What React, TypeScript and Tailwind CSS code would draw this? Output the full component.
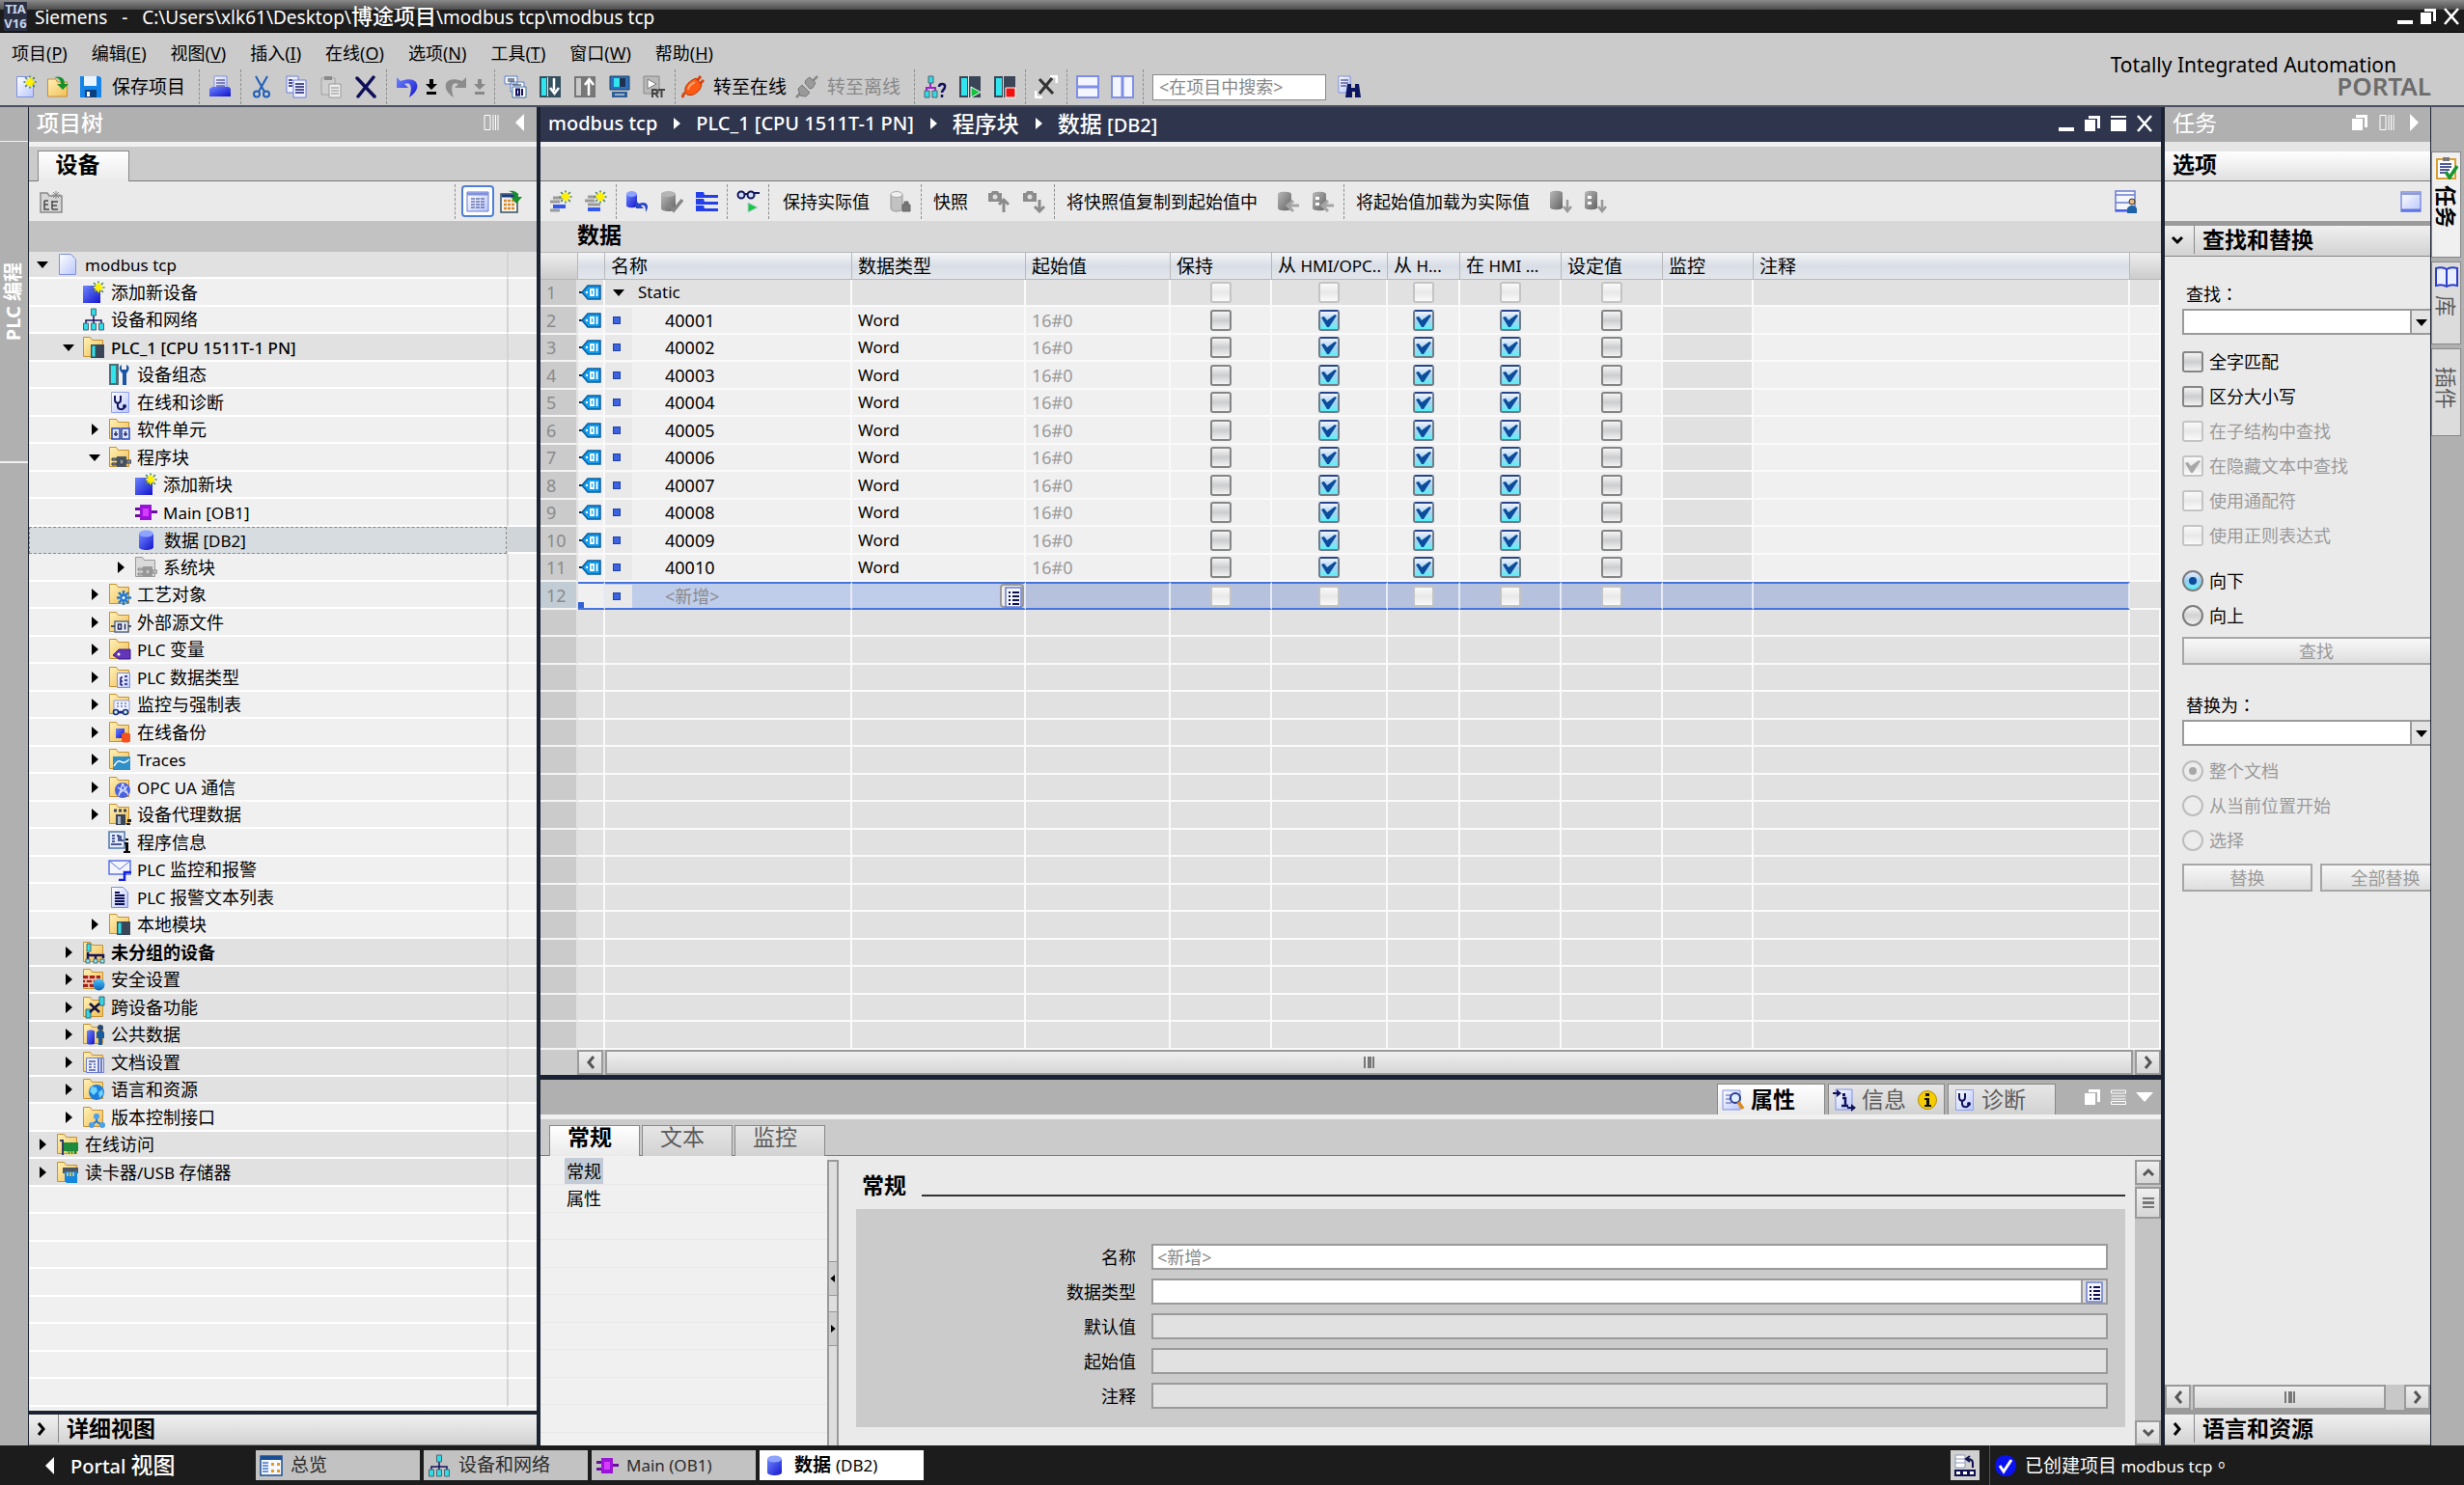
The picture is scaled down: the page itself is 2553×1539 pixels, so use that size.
import type { ReactNode } from "react";
import clsx from "clsx";

/* ---------- icon parts ---------- */

function Defs() {
  return (
    <svg width="0" height="0" className="absolute" aria-hidden="true">
      <defs>
        <linearGradient id="gold" x1="0" y1="0" x2="1" y2="1">
          <stop offset="0" stopColor="#fff1b8" />
          <stop offset="1" stopColor="#f0bf55" />
        </linearGradient>
        <linearGradient id="blue" x1="0" y1="0" x2="1" y2="1">
          <stop offset="0" stopColor="#6d86ff" />
          <stop offset="1" stopColor="#1414cc" />
        </linearGradient>
        <linearGradient id="page" x1="0" y1="0" x2="1" y2="1">
          <stop offset="0" stopColor="#ffffff" />
          <stop offset="1" stopColor="#b9c6fb" />
        </linearGradient>
        <linearGradient id="grey" x1="0" y1="0" x2="1" y2="1">
          <stop offset="0" stopColor="#b8b8b8" />
          <stop offset="1" stopColor="#626262" />
        </linearGradient>
        <linearGradient id="sky" x1="0" y1="0" x2="0" y2="1">
          <stop offset="0" stopColor="#4cc4ff" />
          <stop offset="1" stopColor="#0a63b5" />
        </linearGradient>
      </defs>
    </svg>
  );
}

const folder = <path d="M1.500 1.500h7l2 3h11v17h-20z" fill="url(#gold)" stroke="#c8912f" />;
const greyFolder = <path d="M1.500 1.500h7l2 3h11v17h-20z" fill="#d9d9d9" stroke="#9a9a9a" />;
const page = <path d="M3.500 1.500h12l5 5v16h-17z" fill="url(#page)" stroke="#7f90e0" />;
const star = (
  <g strokeLinecap="round">
    <path d="M17 1v12M11 7h12M12.500 2.500l9 9M21.500 2.500l-9 9" stroke="#3f7d5a" strokeWidth="1.500" />
    <path d="M17 3v8M13 7h8M14.500 4.500l5 5M19.500 4.500l-5 5" stroke="#fff200" strokeWidth="2" />
  </g>
);
const cylinder = (fill: string, top: string) => (
  <>
    <path d="M4 5v14c0 4 15 4 15 0V5z" fill={fill} />
    <ellipse cx="11.500" cy="5" rx="7.500" ry="3.500" fill={top} />
  </>
);
const plcBox = (
  <>
    <rect x="9" y="9" width="6" height="14" fill="#34505e" />
    <rect x="10.500" y="10.500" width="3" height="11" fill="#31e5ee" />
    <rect x="15" y="9" width="8" height="14" fill="#3a4557" />
  </>
);
const network = (
  <g>
    <path d="M12 8v5M4 17v-4h16v4M12 13v4" stroke="#131360" strokeWidth="1.500" fill="none" />
    <path d="M9.500 1h5v7h-5zM1.500 16h5v7h-5zM9.500 16h5v7h-5zM17.500 16h5v7h-5z" fill="#2fdce6" stroke="#4a6470" />
  </g>
);

const icons: Record<string, ReactNode> = {
  newProject: (<>{page}{star}</>),
  open: (<><path d="M1.500 4h8l2 3h10v15h-20z" fill="url(#gold)" stroke="#c8912f" /><path d="M8 2c7-2 11 1 11 7h4l-6 6-6-6h4c0-4-2-6-7-7z" fill="#15902c" /></>),
  save: (<><path d="M1 1h20l2 2v20H1z" fill="#1484e8" /><path d="M5 1h13v10H5z" fill="#eaf4ff" /><path d="M6 15h12v8H6z" fill="#0b3f80" /><path d="M8 17h3v5H8z" fill="#fff" /></>),
  print: (<><path d="M6 1h13v13H6z" fill="url(#page)" stroke="#7f90e0" /><path d="M8 5h9M8 8h9M8 11h9" stroke="#20207a" /><path d="M1 14l3-2h17l2 2v8H1z" fill="url(#blue)" /></>),
  cut: (<g fill="none" stroke="#1f5fb8" strokeWidth="2"><path d="M6 1l9 16M18 1L9 17" /><circle cx="7" cy="19.500" r="3" /><circle cx="17" cy="19.500" r="3" /></g>),
  copy: (<><path d="M2 1h12v17H2z" fill="#eef1ff" stroke="#6d7fd8" /><path d="M9 5h13v18H9z" fill="#eef1ff" stroke="#6d7fd8" /><path d="M11 9h9M11 12h9M11 15h9M11 18h9M4 5h4M4 8h4M4 11h4" stroke="#1a1a70" strokeWidth="1.500" /></>),
  paste: (<><path d="M2 3h14v17H2z" fill="#cfcfcf" stroke="#a0a0a0" /><path d="M5 1h8v4H5z" fill="#8a8a8a" /><path d="M10 9h12v14H10z" fill="#ededed" stroke="#999" /><path d="M12 13h8M12 16h8M12 19h8" stroke="#888" /></>),
  remove: (<path d="M3 3l18 19M20 2L4 22" stroke="#10105a" strokeWidth="3.500" strokeLinecap="round" />),
  undo: (<path d="M1 2v11h12l-4-4c6-3 9 2 5 14 14-9 10-24-9-17z" fill="url(#blue)" />),
  redo: (<path d="M23 2v11H11l4-4C9 6 6 11 10 23-4 14 0-1 19 6z" fill="#8b8b8b" />),
  compile: (<><path d="M1 1h13v8H1zM7 7h14v10H7z" fill="#f3f7ff" stroke="#5b7ec8" /><path d="M4 4h7M4 6h7M9 10h9" stroke="#123" /><path d="M9 12h14v11H9z" fill="#fff" stroke="#3c6ea0" /><path d="M13 14.500h3v6h-3zM19 14v7" fill="none" stroke="#101060" strokeWidth="2" /></>),
  download: (<><path d="M1 1h22v22H1z" fill="#34505e" /><path d="M3 3h5v18H3z" fill="#31e5ee" /><path d="M9 2h1v20H9z" fill="#e8e8e8" /><path d="M16 3v13M12 13l4.500 6 4.500-6" stroke="#fff" strokeWidth="2.500" fill="none" /></>),
  upload: (<><path d="M1 1h22v22H1z" fill="#777" /><path d="M3 3h5v18H3z" fill="#c9c9c9" /><path d="M16 21V6M12 10l4.500-6L21 10" stroke="#fff" strokeWidth="2.500" fill="none" /></>),
  simulate: (<><path d="M2 1h20v14H2z" fill="#2c6fc0" stroke="#21405e" /><path d="M6 3h6v9H6z" fill="#31e5ee" /><path d="M12 3h6v9h-6z" fill="#203050" /><path d="M4 17h16v6H4z" fill="#2d5f94" /><path d="M7 20h10" stroke="#fff" /></>),
  runtime: (<><path d="M1 1h16v18H1z" fill="#b9b9b9" stroke="#888" /><path d="M5 4l9 5-9 5z" fill="#fff" stroke="#777" /><path d="M10 23v-8h3c3 0 3 4 0 4h-3M13 19l3 4M16 15h7M19.500 15v8" stroke="#444" strokeWidth="2" fill="none" /></>),
  goOnline: (<><path d="M1 23c1-3 1-4 3-5M16 6l4-5M19 9l4-4" stroke="#d8430a" strokeWidth="3" /><path d="M4 17C3 11 7 8 11 5l4-2 6 7-2 5c-4 4-8 7-13 5z" fill="#ff5a14" stroke="#b53400" /><path d="M7 15c0-4 3-6 7-8" stroke="#ffa06a" strokeWidth="2" fill="none" /></>),
  goOffline: (<><path d="M1 23l5-5M18 6l5-5" stroke="#888" strokeWidth="2.500" /><path d="M11 5l4-3 6 6-3 5-3 1-5-6zM3 14l4-4 8 8-4 4-6-1z" fill="#9a9a9a" stroke="#777" /></>),
  accessible: (<><path d="M7 8v4M3 17v-4h9v4" stroke="#a020c8" strokeWidth="2" fill="none" /><path d="M5 1h5v7H5zM1 16h5v7H1zM9 16h5v7H9z" fill="#2fdce6" stroke="#4a6470" /><path d="M16 12c0-4 7-4 6 0 0 3-3 3-3 6M19 20v3" stroke="#131360" strokeWidth="2.500" fill="none" /></>),
  start: (<><path d="M1 1h22v22H1z" fill="#3a4557" /><path d="M3 3h6v18H3z" fill="#31e5ee" /><path d="M10 1h1v22h-1z" fill="#ddd" /><path d="M13 12l10 5.500L13 23z" fill="#15c23c" stroke="#fff" /></>),
  stop: (<><path d="M1 1h22v22H1z" fill="#3a4557" /><path d="M3 3h6v18H3z" fill="#31e5ee" /><path d="M10 1h1v22h-1z" fill="#ddd" /><path d="M13 13h10v10H13z" fill="#f01010" stroke="#fff" /></>),
  crossRef: (<><path d="M16 1h7v7M8 23H1v-7" stroke="#fff" strokeWidth="3" fill="none" /><path d="M5 4l14 15M18 3L5 19" stroke="#333" strokeWidth="3" /></>),
  splitH: (<><path d="M1 1h22v22H1z" fill="#f3f5ff" stroke="#7f8fe6" strokeWidth="2" /><path d="M1 12h22" stroke="#7f8fe6" strokeWidth="3" /></>),
  splitV: (<><path d="M1 1h22v22H1z" fill="#f3f5ff" stroke="#7f8fe6" strokeWidth="2" /><path d="M12 1v22" stroke="#7f8fe6" strokeWidth="3" /></>),
  find: (<><path d="M1 1h12v17H1z" fill="url(#page)" stroke="#7f90e0" /><path d="M3 5h8M3 8h8M3 11h6" stroke="#20207a" /><path d="M10 9h4v4h4V9h4l2 14h-6v-6h-3v6H8z" fill="#0c1660" /></>),
  project: page,
  addNew: (<><path d="M1 5h18v18H1z" fill="url(#blue)" />{star}</>),
  network,
  plc: (<>{folder}{plcBox}</>),
  config: (<><path d="M1 1h10v22H1z" fill="#4d7077" /><path d="M3 3h5v18H3z" fill="#31e5ee" /><path d="M15 23V11c-4-3-4-7-1-9v5h5V2c4 2 3 6 0 9v12z" fill="#1b55a8" /></>),
  diag: (<><path d="M3.500 1.500h18v21h-18z" fill="url(#page)" stroke="#8fa0ee" /><path d="M7 5v4c0 5 6 5 6 0V5M10 13v3c0 4 6 4 7 1" stroke="#11115c" strokeWidth="2" fill="none" /><circle cx="17" cy="16" r="2" fill="#11115c" /></>),
  units: (<>{folder}<path d="M4 11h8v11H4zM14 11h8v11h-8z" fill="#dfe8ff" stroke="#2846b8" strokeWidth="1.500" /><path d="M6 17h4M8 14v5M16 17h4M18 14v5" stroke="#2b2b5c" strokeWidth="1.500" /></>),
  blocks: (<>{folder}<path d="M9 11h10v11H9z" fill="#4b5664" /><path d="M12 14h4v5h-4zM4 13h5v2H4zM4 18h5v2H4zM19 15h5v3h-5z" fill="#8c95a0" stroke="#333b46" /></>),
  main: (<><path d="M6 4h12v16H6z" fill="#9a14d8" /><path d="M9 8h6v8H9z" fill="#d63bff" /><path d="M1 7h5v3H1zM1 14h5v3H1zM18 10h6v3h-6z" fill="#6a0fa0" /></>),
  db: cylinder("url(#blue)", "#8ea2ff"),
  sysBlocks: (<>{greyFolder}<path d="M9 11h10v11H9z" fill="#999" /><path d="M12 14h4v5h-4zM4 13h5v2H4zM4 18h5v2H4zM19 15h5v3h-5z" fill="#c5c5c5" stroke="#888" /></>),
  tech: (<>{folder}<path d="M16 8v15M9 15.500h15M11 10l10 11M21 10L11 21" stroke="#2079d8" strokeWidth="2.500" /><circle cx="16" cy="15.500" r="3.500" fill="#2079d8" /><circle cx="16" cy="15.500" r="1.500" fill="#fff" /></>),
  sources: (<>{folder}<path d="M7 11h14v11H7z" fill="#eef2f8" stroke="#5a6a80" strokeWidth="1.500" /><path d="M10.500 14h3v5h-3zM17.500 13.500v6M3 16h4M21 16h3" stroke="#1c2458" strokeWidth="1.500" fill="none" /></>),
  tags: (<>{folder}<path d="M5 18l6-6h12v10H11z" fill="#6335b8" stroke="#3c1a86" /><circle cx="11" cy="17" r="1.500" fill="#fff" /></>),
  types: (<>{folder}<path d="M9.500 7.500h13v15h-13z" fill="url(#page)" stroke="#7f90e0" /><path d="M13 12v8M13 12h2M13 16h2M17 11h3M17 15h3M17 19h3M13 20h2" stroke="#1a1a70" strokeWidth="1.500" /></>),
  watch: (<>{folder}<path d="M6 8h16v11H6z" fill="#f1f4ff" stroke="#8c9ad8" /><path d="M9 11h11M9 14h11" stroke="#8c9ad8" strokeWidth="2" strokeDasharray="2 2" /><circle cx="8" cy="20" r="2.500" fill="#cfe" stroke="#1a2a80" strokeWidth="1.500" /><circle cx="18" cy="20" r="2.500" fill="#cfe" stroke="#1a2a80" strokeWidth="1.500" /><path d="M10 20h6" stroke="#1a2a80" strokeWidth="2" /></>),
  backup: (<>{folder}<path d="M8 8h9v10H8z" fill="url(#blue)" /><path d="M14 14c0-2 9-2 9 0v7c0 2-9 2-9 0z" fill="#f4511e" /></>),
  traces: (<>{folder}<path d="M5 9h18v14H5z" fill="#2f8fc8" /><path d="M6 19c5-8 6-5 9-4s4-1 7-3" stroke="#fff" strokeWidth="1.500" fill="none" /></>),
  opc: (<>{folder}<circle cx="15" cy="15" r="8" fill="#4a62e0" /><path d="M10 12l10 6M15 8l-4 13M20 11l-9 8M15 8l6 12" stroke="#dfe5ff" strokeWidth="1.200" /></>),
  proxy: (<>{folder}<path d="M6 8h3M11 8h3M16 8h3" stroke="#3a4557" strokeWidth="3" /><path d="M8 12h10v11H8z" fill="#3a4557" /><path d="M10 14h3v8h-3z" fill="#aab6c4" /><path d="M20 18h3v1h-3M19 22h4" stroke="#222" strokeWidth="2" /></>),
  progInfo: (<><path d="M1 1h16v17H1z" fill="#e4edff" stroke="#4f78a8" strokeWidth="1.500" /><path d="M4 5h3M4 8h3M4 11h3M9 5h2v6M13 5v5h3M3 14h11" stroke="#1a2a70" strokeWidth="1.500" fill="none" /><path d="M17 12h4v9h2v2h-7v-2h2v-7h-1zM18 8h3v2h-3z" fill="#0a0a0a" /></>),
  alarms: (<><path d="M1 3h22v14H1z" fill="#f3f5ff" stroke="#5e74e0" strokeWidth="1.500" /><path d="M1 3l11 9L23 3" stroke="#5e74e0" fill="none" /><path d="M11 23h6v-8h7" stroke="#1420e0" strokeWidth="2.500" fill="none" /></>),
  textList: (<>{page}<path d="M7 7h5M7 10h10M7 13h10M7 16h10M7 19h10" stroke="#0c0c50" strokeWidth="1.800" /></>),
  ungrouped: (<>{folder}<path d="M5 3h4v8H5z" fill="#31e5ee" stroke="#4a6470" /><path d="M6 12v3h16v3M6 15v4M14 15v4" stroke="#131360" strokeWidth="2.500" fill="none" /><path d="M4 19h4v4H4zM12 19h4v4h-4zM19 19h4v4h-4z" fill="#8fe9f0" stroke="#4a6470" /></>),
  security: (<>{folder}<path d="M1 8h18v12H1z" fill="#a81e14" /><path d="M1 12h18M1 16h18M7 8v4M14 8v4M4 12v4M11 12v4M7 16v4" stroke="#f3d9c0" strokeWidth="1.500" /><circle cx="17.500" cy="17.500" r="6" fill="url(#sky)" /></>),
  cross: (<>{folder}<path d="M18 1h5v9h-5zM4 14h5v9H4z" fill="#31d5e5" stroke="#3c6670" /><path d="M8 8l10 9M18 8L8 17" stroke="#121240" strokeWidth="2.500" /></>),
  common: (<>{folder}<path d="M5 9c0-2 8-2 8 0v12c0 2-8 2-8 0z" fill="url(#blue)" /><circle cx="19" cy="5" r="3" fill="#27476e" /><path d="M15 10c2-3 6-3 8 0v6h-2v7h-4v-7h-2z" fill="#1a5aa0" /></>),
  docs: (<>{folder}<path d="M4.500 7.500h18v15h-18z" fill="#eef1ff" stroke="#6b7cd0" /><path d="M7 11h7M7 14h3M12 14h2M7 17h3M12 17h2M7 20h7M17 8v14M20 8v14" stroke="#4656a8" strokeWidth="1.500" /></>),
  language: (<>{folder}<circle cx="15" cy="15" r="8" fill="#1c7ede" /><path d="M10 9l5 1 1 4-4 4-4-4zM17 15l4-3 1 5-4 4z" fill="#6fd4ff" /></>),
  version: (<>{folder}<path d="M15 10v6l-5 4M15 16l5 4" stroke="#2778d0" strokeWidth="2" fill="none" /><circle cx="15" cy="11" r="3" fill="#4aa0f0" /><circle cx="10" cy="20" r="3" fill="#4aa0f0" /><circle cx="21" cy="20" r="3" fill="#4aa0f0" /></>),
  access: (<>{folder}<path d="M7 10h16v9h-2v3H11v-3H7z" fill="#1e8a3c" /><path d="M4 8h3v15" stroke="#333a66" strokeWidth="2" fill="none" /><path d="M12 19v4M15 19v4M18 19v4" stroke="#e8d35a" strokeWidth="1.500" /></>),
  card: (<>{folder}<path d="M7 7h16v6H7z" fill="#4b5664" /><path d="M9 11h13v12H11l-2-2z" fill="#1286e0" /><path d="M12 12v4M15 12v4M18 12v4" stroke="#ffd75a" strokeWidth="1.500" /></>),
  newGroup: (<><path d="M1 3h7l2 3h13v17H1z" fill="#d6d6d6" stroke="#8a8a8a" strokeWidth="1.500" /><path d="M5 11h4M5 11v9h5M5 15h4M13 11v9M13 12h6M13 16h5M13 20h6" stroke="#4a4a4a" strokeWidth="1.500" fill="none" /><path d="M17 1v8M13 5h9M14 2l6 6M20 2l-6 6" stroke="#888" /></>),
  list: (<><path d="M1 2h22v20H1z" fill="url(#page)" stroke="#6b7cd0" /><path d="M1 4h22" stroke="#7f90e0" strokeWidth="3" /><path d="M5 9h14M5 12h14M5 15h14M5 18h14" stroke="#333f88" strokeWidth="1.200" strokeDasharray="4 1" /></>),
  export: (<><path d="M1 4h17v19H1z" fill="#f5f5f5" stroke="#34505e" strokeWidth="1.500" /><path d="M2 6h15" stroke="#1a3a80" strokeWidth="3" /><path d="M4 11h11M4 15h11M4 19h11" stroke="#d88a28" strokeWidth="2.500" strokeDasharray="3 1" /><path d="M9 1c7-1 10 2 10 6h4l-6 7-6-7h4c0-3-2-5-6-6z" fill="#15902c" /></>),
  insertRow: (<><path d="M4 8h10M1 12h10M1 21h10" stroke="#9a9a9a" strokeWidth="3" /><path d="M4 17h13" stroke="#3358f0" strokeWidth="4" />{star}</>),
  addRow: (<><path d="M4 7h10M1 11h10M4 15h13" stroke="#9a9a9a" strokeWidth="3" /><path d="M4 20h13" stroke="#3358f0" strokeWidth="4" />{star}</>),
  dbReset: (<><path d="M1 4v12c0 3 11 3 11 0V4z" fill="url(#blue)" /><ellipse cx="6.500" cy="4" rx="5.500" ry="3" fill="#8ea2ff" /><path d="M11 11v8h8l-3-3c4-1 5 1 5 7 5-8 0-12-7-9z" fill="#2846c8" /></>),
  dbCheck: (<><path d="M1 4v15c0 4 15 4 15 0V4z" fill="url(#grey)" /><ellipse cx="8.500" cy="4" rx="7.500" ry="3" fill="#b5b5b5" /><path d="M9 15l5 6 9-11" stroke="#858585" strokeWidth="3.500" fill="none" /></>),
  expand: (<path d="M1 2h8l1 3h14v3H1zM1 9h8l1 3h14v3H1zM1 16h8l1 3h14v3H1z" fill="#2440e8" />),
  monitor: (<><circle cx="5" cy="5" r="3.500" fill="#cfe0ff" stroke="#16165c" strokeWidth="2" /><circle cx="15" cy="5" r="3.500" fill="#cfe0ff" stroke="#16165c" strokeWidth="2" /><path d="M8.500 4h3M18 3h6" stroke="#16165c" strokeWidth="2" /><path d="M12 13l10 5-10 5z" fill="#18c840" stroke="#bcd" /></>),
  lock: (<><path d="M2 4v15c0 4 12 4 12 0V4z" fill="#c2c2c2" stroke="#969696" /><ellipse cx="8" cy="4.500" rx="6" ry="3" fill="#efefef" stroke="#aaa" /><path d="M14 15h8v7h-8zM16 15v-3h4v3" fill="#777" stroke="#666" /></>),
  snapUp: (<><path d="M1 3h3l1-2h6l1 2h3v9H1z" fill="#8c8c8c" /><circle cx="8" cy="7" r="2.500" fill="#ddd" /><path d="M17 23V12M12 15l5-5 5 5" stroke="#8c8c8c" strokeWidth="3" fill="none" /></>),
  snapDown: (<><path d="M1 3h3l1-2h6l1 2h3v9H1z" fill="#8c8c8c" /><circle cx="8" cy="7" r="2.500" fill="#ddd" /><path d="M18 10v10M13 17l5 5 5-5" stroke="#8c8c8c" strokeWidth="3" fill="none" /></>),
  copyAll: (<><path d="M1 4v15c0 3 14 3 14 0V4c0-3-14-3-14 0z" fill="url(#grey)" /><path d="M23 16H12M17 11l-6 5 6 6" stroke="#a5a5a5" strokeWidth="3" fill="none" /></>),
  copySome: (<><path d="M1 4v15c0 3 14 3 14 0V4c0-3-14-3-14 0z" fill="url(#grey)" /><path d="M4 7h4v3H4zM4 13h4v3H4z" fill="#fff" /><path d="M23 16H12M17 11l-6 5 6 6" stroke="#a5a5a5" strokeWidth="3" fill="none" /></>),
  loadAll: (<><path d="M1 3v15c0 3 13 3 13 0V3c0-3-13-3-13 0z" fill="url(#grey)" /><path d="M19 10v10M15 17l4 5 4-5" stroke="#999" strokeWidth="2.500" fill="none" /></>),
  loadSome: (<><path d="M1 3v15c0 3 13 3 13 0V3c0-3-13-3-13 0z" fill="url(#grey)" /><path d="M4 6h4v3H4zM4 12h4v3H4z" fill="#fff" /><path d="M19 10v10M15 17l4 5 4-5" stroke="#999" strokeWidth="2.500" fill="none" /></>),
  userView: (<><path d="M1 1h20v21H1z" fill="#f5f7ff" stroke="#6b7cd0" strokeWidth="1.500" /><path d="M1 5h20M1 13h20" stroke="#6b7cd0" strokeWidth="1.500" /><path d="M1 21h20" stroke="#4a60e8" strokeWidth="2" /><circle cx="18" cy="12" r="3" fill="#e9b98a" stroke="#332" /><path d="M13 24v-5c2-4 8-4 10 0v5z" fill="#1f62a8" /></>),
  windowView: (<><path d="M2 2h20v20H2z" fill="url(#page)" stroke="#7f90e0" strokeWidth="1.500" /><path d="M2 4h20M2 21h20" stroke="#8f9cd0" strokeWidth="2" /><path d="M2 21h20" stroke="#6176e0" strokeWidth="3" /></>),
  tag: (<><path d="M1 12h6" stroke="#0e2b4c" strokeWidth="2" /><path d="M4 12l6-7h13v14H10z" fill="#119cec" stroke="#0b5c9c" strokeWidth="1.500" /><path d="M13 9h3v6h-3zM19.500 8v8" stroke="#fff" strokeWidth="1.800" /><circle cx="9" cy="12" r="1.200" fill="#fff" /></>),
  listBtn: (<><path d="M4 2h16v20H4z" fill="#f5f7ff" stroke="#6b7cd0" strokeWidth="1.500" /><path d="M7 7h2M11 7h7M7 11h2M11 11h7M7 15h2M11 15h7M7 19h2M11 19h7" stroke="#101050" strokeWidth="1.800" /></>),
  props: (<><path d="M1 2h18v20H1z" fill="url(#page)" stroke="#7f90e0" /><path d="M4 7h6M4 11h5M4 15h6" stroke="#4a58a8" /><circle cx="14" cy="10" r="5" fill="#dff0ff" stroke="#2a3a90" strokeWidth="2" /><path d="M17 14l5 7" stroke="#e08a1a" strokeWidth="3.500" /></>),
  info: (<><path d="M3 1h17v21H3z" fill="url(#page)" stroke="#7f90e0" /><path d="M10 10h3v8M9 18h7" stroke="#11115c" strokeWidth="2.500" fill="none" /><path d="M10 5h3v3h-3zM0 4h4V1l5 4-5 4V6H0zM15 19h4v-3l5 4-5 4v-3h-4z" fill="#11115c" /></>),
  clip: (<><path d="M2 3h19v20H2z" fill="#fff" stroke="#d8a032" strokeWidth="2" /><path d="M8 1h7v4H8z" fill="#777" /><path d="M5 8h12M5 11h12M5 14h10M5 17h6" stroke="#1a2470" strokeWidth="1.500" /><path d="M11 16l4 6 8-12" stroke="#17952f" strokeWidth="3.500" fill="none" /></>),
  book: (<><path d="M1 2c4-1 8-1 11 1 3-2 7-2 11-1v18c-4-1-8-1-11 1-3-2-7-2-11-1z" fill="#eaf0ff" stroke="#2c3ec8" strokeWidth="2" /><path d="M12 3v18" stroke="#2c3ec8" strokeWidth="2" /></>),
  overview: (<><path d="M1 2h22v20H1z" fill="#f6f9ff" stroke="#1b4f94" strokeWidth="1.500" /><path d="M1 4h22" stroke="#1b4f94" strokeWidth="4" /><path d="M3 9h6M3 12h6M3 15h6M3 18h6" stroke="#3f74c4" strokeWidth="1.500" /><path d="M12 9h3v3h-3zM18 9h3v3h-3zM12 16h3v3h-3zM18 16h3v3h-3z" fill="#e79a1c" /></>),
  jobs: (<><path d="M2 1h10v13H2z" fill="#fff" stroke="#8a97b8" /><path d="M2 5h10M2 9h10" stroke="#8a97b8" /><path d="M20 14V9c0-3-2-4-6-4M17 2l-4 3 4 3" stroke="#101050" strokeWidth="2" fill="none" /><path d="M1 16h22v7H1z" fill="#101050" /><path d="M3 18h4v3H3zM10 18h4v3h-4zM17 18h4v3h-4z" fill="#fff" /></>),
};

function Icon({ name }: { name: string }) {
  return (
    <svg viewBox="0 0 24 24" className="size-6 shrink-0" fill="none" aria-hidden="true">
      {icons[name]}
    </svg>
  );
}

function Tool({ name }: { name: string }) {
  return (
    <button type="button" aria-label={name} className="size-6 shrink-0">
      <Icon name={name} />
    </button>
  );
}

function Group({ children, className = "gap-3 px-[9px]" }: { children: ReactNode; className?: string }) {
  return (
    <div className={clsx("flex h-9 items-center border-l border-dashed border-[#8f8f8f]", className)}>
      {children}
    </div>
  );
}

// Latin runs are set one step smaller than the Chinese around them
function Mixed({ text }: { text: string }) {
  return (
    <>
      {text.split(/([\x20-\x7e]+)/).map((part, i) =>
        i % 2 ? (
          <span key={i} className="text-[17px]">{part}</span>
        ) : (
          part
        ),
      )}
    </>
  );
}

// punctuation centred in its square
function Mark({ children }: { children: string }) {
  return <span lang="zh-TW" className="font-['Noto_Sans_CJK_TC',sans-serif]">{children}</span>;
}

function Caret({ dir, size = "size-3" }: { dir: "right" | "down" | "left"; size?: string }) {
  const d = { right: "M3 0l7 6-7 6z", down: "M0 3h12L6 10z", left: "M9 0L2 6l7 6z" }[dir];
  return (
    <svg viewBox="0 0 12 12" className={clsx("shrink-0 fill-current", size)} aria-hidden="true">
      <path d={d} />
    </svg>
  );
}

function Chevron({ dir }: { dir: "right" | "down" | "left" | "up" }) {
  const d = {
    right: "M4 1l5 6-5 6",
    left: "M10 1L5 7l5 6",
    down: "M2 4l5 5 5-5",
    up: "M2 10l5-5 5 5",
  }[dir];
  return (
    <svg viewBox="0 0 14 14" className="size-3.5 shrink-0 fill-none stroke-current stroke-[3]" aria-hidden="true">
      <path d={d} />
    </svg>
  );
}

type Glyph = "min" | "restore" | "max" | "close" | "columns" | "rows" | "left" | "right" | "down";

const glyphs: Record<Glyph, ReactNode> = {
  min: <path d="M1 13h16v4H1z" fill="#fff" />,
  restore: <path d="M1 5h11v12H1zM5 1h12v13h-3V4H5z" fill="#fff" />,
  max: <path d="M1 1h16v2H1zM1 5h16v12H1z" fill="#fff" />,
  close: <path d="M2 1l14 16M16 1L2 17" stroke="#fff" strokeWidth="2.500" />,
  columns: <path d="M2 1.500h6v15H2zM11 1v16M13.500 1v16M16 1v16" stroke="#fff" />,
  rows: <path d="M1.500 2h15v3h-15zM1.500 8h15M1.500 11h15M1.500 13.500h15v3h-15z" stroke="#fff" />,
  left: <path d="M13 0v18L4 9z" fill="#fff" />,
  right: <path d="M5 0v18l9-9z" fill="#fff" />,
  down: <path d="M0 4h18l-9 10z" fill="#fff" />,
};

function Sign({ glyph }: { glyph: Glyph }) {
  return (
    <svg viewBox="0 0 18 18" className="size-[18px] shrink-0" fill="none" aria-hidden="true">
      {glyphs[glyph]}
    </svg>
  );
}

function WinButton({ glyph }: { glyph: Glyph }) {
  return (
    <button type="button" aria-label={glyph} className="size-[18px] shrink-0">
      <Sign glyph={glyph} />
    </button>
  );
}

/* ---------- top ---------- */

const menus = [
  ["项目", "P"], ["编辑", "E"], ["视图", "V"], ["插入", "I"], ["在线", "O"],
  ["选项", "N"], ["工具", "T"], ["窗口", "W"], ["帮助", "H"],
];

function DropTick({ className }: { className?: string }) {
  return (
    <svg viewBox="0 0 12 18" className={clsx("h-[18px] w-3 shrink-0 fill-current", className)} aria-hidden="true">
      <path d="M4 1h4v5h4l-6 6-6-6h4zM1 14h10v3H1z" />
    </svg>
  );
}

function TopBar() {
  return (
    <header className="shrink-0">
      <div className="flex h-[34px] items-center border-b border-black bg-linear-to-b from-[#8b8b8b] from-0% via-[#4d4d4d] via-30% to-[#1c1c1c] to-30% pr-1 pl-1 text-white">
        <div className="mr-2 w-6 bg-[#2a3042] text-center text-[13px] leading-[15px] font-bold text-[#c9d3ea]">
          TIA V16
        </div>
        <h1 className="flex-1 text-[19px] leading-none whitespace-pre">
          Siemens{"   "}-{"   "}C:\Users\xlk61\Desktop\<span className="text-[22px] leading-none font-medium">博途项目</span>\modbus tcp\modbus tcp
        </h1>
        <div className="flex gap-1.5">
          <WinButton glyph="min" />
          <WinButton glyph="restore" />
          <WinButton glyph="close" />
        </div>
      </div>
      <div className="flex h-[77px] justify-between border-b-2 border-[#4a5060] bg-[#cbcbcb]">
        <div>
          <nav className="flex h-[38px] items-center gap-[25px] pt-1 pl-3 text-lg leading-none">
            {menus.map(([label, key]) => (
              <button type="button" key={key}>
                {label}(<span className="underline underline-offset-2">{key}</span>)
              </button>
            ))}
          </nav>
          <div className="flex items-center text-[19px] leading-none">
            <div className="flex items-center gap-2.5 px-3.5">
              <Tool name="newProject" />
              <Tool name="open" />
              <Tool name="save" />
              <button type="button">保存项目</button>
            </div>
            <Group><Tool name="print" /></Group>
            <Group>
              <Tool name="cut" />
              <Tool name="copy" />
              <Tool name="paste" />
              <Tool name="remove" />
            </Group>
            <Group className="gap-[7px] px-[9px]">
              <Tool name="undo" />
              <DropTick />
              <Tool name="redo" />
              <DropTick className="text-[#888]" />
            </Group>
            <Group>
              <Tool name="compile" />
              <Tool name="download" />
              <Tool name="upload" />
              <Tool name="simulate" />
              <Tool name="runtime" />
            </Group>
            <Group className="gap-[9px] pr-3.5 pl-1.5">
              <Tool name="goOnline" />
              <button type="button">转至在线</button>
              <Tool name="goOffline" />
              <button type="button" className="text-[#888]">转至离线</button>
            </Group>
            <Group>
              <Tool name="accessible" />
              <Tool name="start" />
              <Tool name="stop" />
            </Group>
            <Group><Tool name="crossRef" /></Group>
            <Group>
              <Tool name="splitH" />
              <Tool name="splitV" />
            </Group>
            <Group>
              <input
                aria-label="在项目中搜索"
                placeholder="<在项目中搜索>"
                className="h-[27px] w-[180px] border border-[#8a8a8a] bg-white px-1.5 text-lg leading-none placeholder:text-[#888]"
              />
              <Tool name="find" />
            </Group>
          </div>
        </div>
        <div className="flex flex-col items-end pt-[22px] pr-[34px]">
          <p className="pr-9 text-[21px] leading-[22px]">Totally Integrated Automation</p>
          <p className="text-[26px] leading-[22px] font-semibold text-[#6c6c6c]">PORTAL</p>
        </div>
      </div>
    </header>
  );
}

/* ---------- project tree ---------- */

type Node = {
  level: 0 | 1 | 2 | 3;
  icon: string;
  text: string;
  arrow?: "right" | "down";
  dark?: boolean;
  bold?: boolean;
  selected?: boolean;
};

const nodes: Node[] = [
  { level: 0, icon: "project", text: "modbus tcp", arrow: "down", dark: true },
  { level: 1, icon: "addNew", text: "添加新设备" },
  { level: 1, icon: "network", text: "设备和网络" },
  { level: 1, icon: "plc", text: "PLC_1 [CPU 1511T-1 PN]", arrow: "down", dark: true },
  { level: 2, icon: "config", text: "设备组态" },
  { level: 2, icon: "diag", text: "在线和诊断" },
  { level: 2, icon: "units", text: "软件单元", arrow: "right" },
  { level: 2, icon: "blocks", text: "程序块", arrow: "down" },
  { level: 3, icon: "addNew", text: "添加新块" },
  { level: 3, icon: "main", text: "Main [OB1]" },
  { level: 3, icon: "db", text: "数据 [DB2]", selected: true },
  { level: 3, icon: "sysBlocks", text: "系统块", arrow: "right" },
  { level: 2, icon: "tech", text: "工艺对象", arrow: "right" },
  { level: 2, icon: "sources", text: "外部源文件", arrow: "right" },
  { level: 2, icon: "tags", text: "PLC 变量", arrow: "right" },
  { level: 2, icon: "types", text: "PLC 数据类型", arrow: "right" },
  { level: 2, icon: "watch", text: "监控与强制表", arrow: "right" },
  { level: 2, icon: "backup", text: "在线备份", arrow: "right" },
  { level: 2, icon: "traces", text: "Traces", arrow: "right" },
  { level: 2, icon: "opc", text: "OPC UA 通信", arrow: "right" },
  { level: 2, icon: "proxy", text: "设备代理数据", arrow: "right" },
  { level: 2, icon: "progInfo", text: "程序信息" },
  { level: 2, icon: "alarms", text: "PLC 监控和报警" },
  { level: 2, icon: "textList", text: "PLC 报警文本列表" },
  { level: 2, icon: "plc", text: "本地模块", arrow: "right" },
  { level: 1, icon: "ungrouped", text: "未分组的设备", arrow: "right", dark: true, bold: true },
  { level: 1, icon: "security", text: "安全设置", arrow: "right", dark: true },
  { level: 1, icon: "cross", text: "跨设备功能", arrow: "right", dark: true },
  { level: 1, icon: "common", text: "公共数据", arrow: "right", dark: true },
  { level: 1, icon: "docs", text: "文档设置", arrow: "right", dark: true },
  { level: 1, icon: "language", text: "语言和资源", arrow: "right", dark: true },
  { level: 1, icon: "version", text: "版本控制接口", arrow: "right" },
  { level: 0, icon: "access", text: "在线访问", arrow: "right", dark: true },
  { level: 0, icon: "card", text: "读卡器/USB 存储器", arrow: "right", dark: true },
];

const indents = ["pl-0", "pl-[27px]", "pl-[54px]", "pl-[81px]"];
const rowHeight = "odd:h-7 even:h-[29px]";

function FoldHeader({ text, open }: { text: string; open?: boolean }) {
  return (
    <div className="flex h-8 shrink-0 items-stretch border-b border-[#888] bg-linear-to-b from-[#f0f0f0] to-[#d2d2d2] pb-0.5">
      <button type="button" aria-label={text} className="grid w-[31px] place-items-center border-r border-[#888] pr-1">
        <Chevron dir={open ? "down" : "right"} />
      </button>
      <h2 className="self-center pl-2 text-[23px] leading-none font-bold">{text}</h2>
    </div>
  );
}

function TreePanel() {
  return (
    <section className="flex w-[527px] shrink-0 flex-col border-l border-[#1b2231] bg-[#f0f0f0]">
      <div className="flex h-9 shrink-0 items-center gap-3 bg-[#b0b0b0] pr-2 pb-1 pl-2 text-white">
        <h2 className="flex-1 text-[23px] leading-none font-medium">项目树</h2>
        <WinButton glyph="columns" />
        <WinButton glyph="left" />
      </div>
      <div className="h-[5px] shrink-0 bg-[#f0f0f0]" />
      <div className="flex h-9 shrink-0 items-end bg-[#cbcbcb] shadow-[inset_0_-1px_#7a7a7a]">
        <button type="button" className="ml-[9px] h-8 w-[95px] border border-b-0 border-[#888] bg-linear-to-b from-white to-[#eaeaea] pr-3 pb-1 text-[23px] leading-none font-bold">
          设备
        </button>
      </div>
      <div className="flex h-[41px] shrink-0 items-center bg-[#eaeaea] pr-3.5 pl-[11px]">
        <Tool name="newGroup" />
        <div className="ml-auto flex h-9 items-center gap-1.5 border-l border-dashed border-[#8f8f8f] pl-1.5">
          <button type="button" aria-label="list" className="grid h-[33px] w-[34px] place-items-center rounded-sm border-2 border-[#4f7fd8] bg-white">
            <Icon name="list" />
          </button>
          <Tool name="export" />
        </div>
      </div>
      <div className="h-8 shrink-0 bg-[#c2c2c2]" />
      <ul className="min-h-0 flex-1 overflow-hidden text-lg leading-none">
        {nodes.map((n, i) => (
          <li key={i} className={clsx("flex", rowHeight)}>
            <div
              className={clsx(
                "flex flex-1 items-center",
                indents[n.level],
                n.selected
                  ? "border border-dashed border-[#8a8a8a] bg-[#d7dce1]"
                  : "border-b-2 border-white",
                !n.selected && (n.dark ? "bg-[#e1e1e1]" : "bg-[#f0f0f0]"),
              )}
            >
              <span className="grid w-7 place-items-center">{n.arrow && <Caret dir={n.arrow} />}</span>
              <Icon name={n.icon} />
              <span className={clsx("pl-1.5 whitespace-nowrap", n.bold && "font-bold", n.icon === "plc" && n.dark && "font-medium")}>
                <Mixed text={n.text} />
              </span>
            </div>
            <div
              className={clsx(
                "w-[31px] border-b-2 border-l-2 border-b-white border-l-[#d4d4d4]",
                n.selected ? "bg-[#d0d5da]" : n.dark ? "bg-[#e1e1e1]" : "bg-[#f0f0f0]",
              )}
            />
          </li>
        ))}
        {Array.from({ length: 8 }, (_, i) => (
          <li key={`e${i}`} className={clsx("flex", rowHeight)}>
            <div className="flex-1 border-b-2 border-white" />
            <div className="w-[31px] border-b-2 border-l-2 border-b-white border-l-[#d4d4d4]" />
          </li>
        ))}
      </ul>
      <div className="h-1 shrink-0 bg-[#1b2231]" />
      <FoldHeader text="详细视图" />
    </section>
  );
}

/* ---------- data block editor ---------- */

function Check({ checked, disabled, label, id }: { checked?: boolean; disabled?: boolean; label?: string; id?: string }) {
  return (
    <span className="grid size-[22px] shrink-0 place-items-center *:col-start-1 *:row-start-1">
      <input
        type="checkbox"
        id={id}
        aria-label={label}
        defaultChecked={checked}
        disabled={disabled}
        className={clsx(
          "size-[22px] appearance-none rounded-[3px] border-2",
          disabled && "border-[#c4c4c4] bg-linear-to-b from-[#fafafa] via-[#e8e8e8] to-[#fafafa]",
          !disabled && !checked && "border-[#858585] bg-linear-to-b from-[#f5f5f5] via-[#cccdcf] to-[#f2f2f2]",
          !disabled && checked && "border-[#707c88] border-t-[#24448e] bg-linear-to-b from-[#f2f5ff] via-[#a8d2f0] to-[#4ff0f6]",
        )}
      />
      {checked && (
        <svg viewBox="0 0 16 16" className={clsx("pointer-events-none size-4 fill-current", disabled ? "text-[#a8a8a8]" : "text-[#0b4c9c]")} aria-hidden="true">
          <path d="M0 5l3-1 3 4 8-6 2 1-8 12H6z" />
        </svg>
      )}
    </span>
  );
}

const headers = ["数据类型", "起始值", "保持", "从 HMI/OPC..", "从 H...", "在 HMI ...", "设定值", "监控", "注释"];
const words = ["40001", "40002", "40003", "40004", "40005", "40006", "40007", "40008", "40009", "40010"];
const flags = [false, true, true, true, false];

const cell = "border-r-2 border-b-2 border-[#fafafa] p-0";
const gutter = "border-r-2 border-b-2 border-r-[#e1e1e1] border-b-[#f4f4f4] p-0 pl-1.5 text-left font-normal text-[#8a8a8a]";

function CheckCell({ checked, disabled, label, className }: { checked?: boolean; disabled?: boolean; label: string; className?: string }) {
  return (
    <td className={clsx(cell, className)}>
      <div className="flex justify-center">
        <Check checked={checked} disabled={disabled} label={label} />
      </div>
    </td>
  );
}

function Dot() {
  return (
    <span className="grid h-[26px] w-7 shrink-0 place-items-center bg-[#e9e9e9]">
      <span className="mr-1 size-2 border border-[#1b3fae] bg-[#3d63e0]" />
    </span>
  );
}

function DataTable() {
  const head = "border-r border-[#b8b8b8] bg-linear-to-b from-[#f4f5f7] via-[#d9dee6] to-[#e3e7ec] p-0 pl-1.5 text-left font-normal whitespace-nowrap";
  const active = "border-y-2 border-r-2 border-y-[#4673dc] border-r-[#e6ebf5] p-0";
  return (
    <table className="w-full table-fixed border-separate border-spacing-0 text-lg leading-6">
      <colgroup>
        <col className="w-[39px]" />
        <col className="w-7" />
        <col className="w-64" />
        <col className="w-[180px]" />
        <col className="w-[150px]" />
        <col className="w-[105px]" />
        <col className="w-[120px]" />
        <col className="w-[75px]" />
        <col className="w-[105px]" />
        <col className="w-[105px]" />
        <col className="w-[94px]" />
        <col />
        <col className="w-8" />
      </colgroup>
      <thead className="text-[19px]">
        <tr className="h-[29px]">
          <th className="border-y border-r border-[#b8b8b8] bg-linear-to-b from-[#eee] to-[#ccc] p-0" />
          <th className={clsx(head, "border-y")} />
          <th className={clsx(head, "border-y")}>名称</th>
          {headers.map((h) => (
            <th key={h} className={clsx(head, "border-y")}><Mixed text={h} /></th>
          ))}
          <th className="border-y border-[#b8b8b8] bg-linear-to-b from-[#eee] to-[#ccc] p-0" />
        </tr>
      </thead>
      <tbody>
        <tr className={clsx(rowHeight, "bg-[#e1e1e1]")}>
          <th className={clsx(gutter, "bg-[#cbcbcb]")}>1</th>
          <td className={cell}><Icon name="tag" /></td>
          <td className={cell}>
            <div className="flex items-center gap-3.5 pl-2 text-[17px]"><Caret dir="down" />Static</div>
          </td>
          <td className={cell} />
          <td className={cell} />
          {flags.map((_, i) => (
            <CheckCell key={i} disabled label={`Static ${headers[i + 2]}`} />
          ))}
          <td className={cell} />
          <td className={cell} />
          <td className={cell} />
        </tr>
        {words.map((w, r) => (
          <tr key={w} className={clsx(rowHeight, "bg-[#f0f0f0]")}>
            <th className={clsx(gutter, "bg-[#cbcbcb]")}>{r + 2}</th>
            <td className={cell}><Icon name="tag" /></td>
            <td className={cell}>
              <div className="flex items-center"><Dot /><span className="pl-[34px]">{w}</span></div>
            </td>
            <td className={clsx(cell, "pl-1.5 text-[17px]")}>Word</td>
            <td className={clsx(cell, "pl-1.5 text-[#9a9a9a]")}>16#0</td>
            {flags.map((f, i) => (
              <CheckCell key={i} checked={f} label={`${w} ${headers[i + 2]}`} />
            ))}
            <td className={clsx(cell, "bg-[#e1e1e1]")} />
            <td className={cell} />
            <td className={cell} />
          </tr>
        ))}
        <tr className={clsx(rowHeight, "bg-[#b5c1dd]")}>
          <th className={clsx(gutter, "bg-[#c2ccd5]")}>12</th>
          <td className={clsx(active, "bg-[#f0f0f0] align-bottom")}>
            <span className="block size-1.5 bg-[#2f62d4]" />
          </td>
          <td className={clsx(active, "bg-[#c0cdea]")}>
            <div className="flex h-6 items-center overflow-hidden text-[#8a8a8a]"><Dot /><span className="pl-[34px]">&lt;新增&gt;</span></div>
          </td>
          <td className={clsx(active, "bg-[#c0cdea]")}>
            <button type="button" aria-label="选择数据类型" className="ml-auto grid size-[25px] place-items-center rounded-sm border-2 border-[#999] bg-[#eee]">
              <Icon name="listBtn" />
            </button>
          </td>
          <td className={active} />
          {flags.map((_, i) => (
            <td key={i} className={active}>
              <div className="flex justify-center"><Check disabled label={`新增 ${headers[i + 2]}`} /></div>
            </td>
          ))}
          <td className={active} />
          <td className={active} />
          <td className="border-b-2 border-[#fafafa] bg-[#e1e1e1] p-0" />
        </tr>
        {Array.from({ length: 16 }, (_, r) => (
          <tr key={r} className={clsx(rowHeight, "bg-[#e1e1e1]")}>
            <td className={clsx(gutter, "bg-[#cbcbcb]")} />
            {Array.from({ length: 12 }, (_, c) => (
              <td key={c} className={cell} />
            ))}
          </tr>
        ))}
      </tbody>
    </table>
  );
}

const scrollPart = "grid place-items-center border-2 border-[#9a9a9a] bg-linear-to-b from-[#efefef] to-[#d6d6d6] text-[#555]";

function HScroll({ thumb }: { thumb: string }) {
  return (
    <div className="flex h-[26px] shrink-0 gap-0.5 bg-[#c8c8c8]">
      <button type="button" aria-label="向左滚动" className={clsx(scrollPart, "w-[27px]")}><Chevron dir="left" /></button>
      <div className={clsx(scrollPart, thumb)}>
        <span className="h-3 w-[11px] border-x-2 border-[#777] px-0.5"><span className="block h-3 border-x-2 border-[#777]" /></span>
      </div>
      <button type="button" aria-label="向右滚动" className={clsx(scrollPart, "ml-auto w-[27px]")}><Chevron dir="right" /></button>
    </div>
  );
}

function Crumb({ children }: { children: ReactNode }) {
  return <a href="#" className="whitespace-nowrap">{children}</a>;
}

function Editor() {
  return (
    <section className="flex min-w-0 flex-1 flex-col border-l-4 border-[#1b2231] bg-[#e1e1e1]">
      <div className="flex h-9 shrink-0 items-center bg-[#2e354d] px-2 pb-0.5 text-white">
        <nav className="flex flex-1 items-center gap-3.5 text-xl leading-none font-medium">
          <Crumb>modbus tcp</Crumb>
          <Caret dir="right" />
          <Crumb>PLC_1 [CPU 1511T-1 PN]</Crumb>
          <Caret dir="right" />
          <Crumb><span className="text-[23px] leading-none">程序块</span></Crumb>
          <Caret dir="right" />
          <Crumb><span className="text-[23px] leading-none">数据</span> [DB2]</Crumb>
        </nav>
        <div className="flex gap-[9px]">
          <WinButton glyph="min" />
          <WinButton glyph="restore" />
          <WinButton glyph="max" />
          <WinButton glyph="close" />
        </div>
      </div>
      <div className="h-[5px] shrink-0 bg-[#f0f0f0]" />
      <div className="h-9 shrink-0 border-b border-[#7a7a7a] bg-[#cbcbcb]" />
      <div className="flex h-[41px] shrink-0 items-center bg-[#eaeaea] pr-6 text-lg leading-none">
        <div className="flex gap-3 px-[9px]">
          <Tool name="insertRow" />
          <Tool name="addRow" />
        </div>
        <Group>
          <Tool name="dbReset" />
          <Tool name="dbCheck" />
          <Tool name="expand" />
        </Group>
        <Group><Tool name="monitor" /></Group>
        <Group className="gap-5 pr-[9px] pl-3.5">
          <button type="button">保持实际值</button>
          <Tool name="lock" />
        </Group>
        <Group className="gap-3 pr-[9px] pl-3">
          <button type="button" className="mr-2">快照</button>
          <Tool name="snapUp" />
          <Tool name="snapDown" />
        </Group>
        <Group className="gap-3 pr-[9px] pl-3">
          <button type="button" className="mr-2">将快照值复制到起始值中</button>
          <Tool name="copyAll" />
          <Tool name="copySome" />
        </Group>
        <Group className="gap-3 pr-[9px] pl-3">
          <button type="button" className="mr-2">将起始值加载为实际值</button>
          <Tool name="loadAll" />
          <Tool name="loadSome" />
        </Group>
        <div className="ml-auto h-6"><Tool name="userView" /></div>
      </div>
      <h2 className="h-8 shrink-0 bg-[#d8d8d8] pl-[38px] text-[23px] leading-7 font-bold">数据</h2>
      <div className="min-h-0 flex-1 overflow-hidden">
        <DataTable />
      </div>
      <div className="shrink-0 bg-[#cbcbcb] pl-[38px]">
        <HScroll thumb="flex-1" />
      </div>
      <Inspector />
    </section>
  );
}

/* ---------- inspector ---------- */

const fields = [
  { id: "name", label: "名称", placeholder: "<新增>" },
  { id: "type", label: "数据类型", picker: true },
  { id: "default", label: "默认值", disabled: true },
  { id: "start", label: "起始值", disabled: true },
  { id: "comment", label: "注释", disabled: true },
];

const tabOn = "bg-linear-to-b from-white to-[#eaeaea] font-bold";
const tabOff = "bg-linear-to-b from-[#e6e6e6] to-[#d2d2d2] text-[#5c5c5c]";

function Inspector() {
  const tab = "flex h-8 items-center gap-1.5 border border-b-0 border-[#888] pl-1 text-[23px] leading-none whitespace-nowrap";
  const sub = "h-8 w-[94px] border border-b-0 border-[#888] pr-2.5 pb-2 text-[23px] leading-none";
  return (
    <div className="flex h-[384px] shrink-0 flex-col border-t-[5px] border-[#1b2231] bg-[#eaeaea]">
      <div className="flex h-9 shrink-0 items-end justify-end gap-[3px] bg-[#b0b0b0] pr-2">
        <button type="button" className={clsx(tab, tabOn, "w-28")}><Icon name="props" />属性</button>
        <button type="button" className={clsx(tab, tabOff, "w-[121px]")}>
          <Icon name="info" />信息
          <svg viewBox="0 0 20 20" className="ml-1.5 size-5" aria-hidden="true">
            <circle cx="10" cy="10" r="9.500" fill="#f5cc00" stroke="#b08f00" />
            <path d="M8 3h4v3H8zM7 8h5v7h2v2H7v-2h2v-5H7z" fill="#111" />
          </svg>
        </button>
        <button type="button" className={clsx(tab, tabOff, "w-28")}><Icon name="diag" />诊断</button>
        <div className="ml-[26px] flex gap-[9px] self-center">
          <WinButton glyph="restore" />
          <WinButton glyph="rows" />
          <WinButton glyph="down" />
        </div>
      </div>
      <div className="h-[5px] shrink-0 bg-[#f0f0f0]" />
      <div className="flex h-[38px] shrink-0 items-end gap-0.5 bg-[#cbcbcb] pl-[9px] shadow-[inset_0_-1px_#7a7a7a]">
        <button type="button" className={clsx(sub, tabOn)}>常规</button>
        <button type="button" className={clsx(sub, tabOff)}>文本</button>
        <button type="button" className={clsx(sub, tabOff)}>监控</button>
      </div>
      <div className="flex min-h-0 flex-1">
        <ul className="w-[297px] shrink-0 overflow-hidden bg-[#f0f0f0] pt-0.5 text-lg leading-none">
          {["常规", "属性", "", "", "", "", "", "", "", ""].map((t, i) => (
            <li key={i} className={clsx("flex items-stretch border-b border-[#e8e8e8] pl-[25px]", rowHeight)}>
              {t && (
                <a href="#" className={clsx("flex items-center px-0.5", i === 0 && "bg-[#c3ccd6]")}>{t}</a>
              )}
            </li>
          ))}
        </ul>
        <div className="mt-1 flex w-3 shrink-0 flex-col items-center border-x-2 border-t-2 border-[#999] bg-[#dedede]">
          <button type="button" aria-label="收起" className="mt-[103px] grid h-9 w-2 place-items-center border-y border-[#999] bg-[#ccc]"><Caret dir="left" size="size-2" /></button>
          <button type="button" aria-label="展开" className="mt-4 grid h-9 w-2 place-items-center border-y border-[#999] bg-[#ccc]"><Caret dir="right" size="size-2" /></button>
        </div>
        <form className="flex min-w-0 flex-1 flex-col pr-2.5 pl-[18px]">
          <div className="flex h-[42px] shrink-0 items-end gap-4">
            <h3 className="pl-1.5 text-[23px] leading-6 font-bold">常规</h3>
            <div className="flex-1 border-b-2 border-[#333]" />
          </div>
          <div className="mt-[13px] flex h-[226px] flex-col gap-[9px] bg-[#cbcbcb] pt-9 pr-[18px]">
            {fields.map((f) => (
              <div key={f.id} className="flex items-center">
                <label htmlFor={f.id} className="w-[290px] shrink-0 text-right text-lg leading-none">{f.label}</label>
                <div className="ml-4 flex h-[27px] flex-1 border-2 border-[#9a9a9a]">
                  <input
                    id={f.id}
                    placeholder={f.placeholder}
                    disabled={f.disabled}
                    className={clsx("min-w-0 flex-1 px-1 text-lg leading-none placeholder:text-[#888]", f.disabled ? "bg-[#e1e1e1]" : "bg-white")}
                  />
                  {f.picker && (
                    <button type="button" aria-label="选择数据类型" className="grid w-[26px] place-items-center border-l-2 border-[#9a9a9a] bg-[#dcdcdc]">
                      <Icon name="listBtn" />
                    </button>
                  )}
                </div>
              </div>
            ))}
          </div>
        </form>
        <div className="mt-1 flex w-[27px] shrink-0 flex-col gap-0.5 bg-[#c4c4c4]">
          <button type="button" aria-label="向上滚动" className={clsx(scrollPart, "h-[26px]")}><Chevron dir="up" /></button>
          <div className={clsx(scrollPart, "h-[33px]")}>
            <span className="h-[11px] w-3 border-y-2 border-[#777] py-0.5"><span className="block h-[3px] bg-[#777]" /></span>
          </div>
          <button type="button" aria-label="向下滚动" className={clsx(scrollPart, "mt-auto h-[26px]")}><Chevron dir="down" /></button>
        </div>
      </div>
    </div>
  );
}

/* ---------- tasks ---------- */

function Combo({ id, label }: { id: string; label: string }) {
  return (
    <div>
      <label htmlFor={id} className="block pl-1 leading-[30px]">{label}<Mark>：</Mark></label>
      <div className="grid w-[260px] *:col-start-1 *:row-start-1">
        <select id={id} className="h-[27px] appearance-none border-2 border-[#9a9a9a] bg-white" />
        <span className="pointer-events-none grid h-[27px] w-6 place-items-center justify-self-end border-2 border-[#9a9a9a] bg-[#e4e4e4]">
          <Caret dir="down" />
        </span>
      </div>
    </div>
  );
}

function Option({ id, label, checked, disabled }: { id: string; label: string; checked?: boolean; disabled?: boolean }) {
  return (
    <div className={clsx("flex h-9 items-center gap-1.5", disabled && "text-[#9a9a9a]")}>
      <Check id={id} checked={checked} disabled={disabled} />
      <label htmlFor={id}>{label}</label>
    </div>
  );
}

function Radio({ id, name, label, checked, disabled }: { id: string; name: string; label: string; checked?: boolean; disabled?: boolean }) {
  return (
    <div className={clsx("flex h-9 items-center gap-1.5", disabled && "text-[#9a9a9a]")}>
      <span className="grid size-[22px] shrink-0 place-items-center *:col-start-1 *:row-start-1">
        <input
          type="radio"
          id={id}
          name={name}
          defaultChecked={checked}
          disabled={disabled}
          className={clsx(
            "size-[22px] appearance-none rounded-full border-2",
            disabled ? "border-[#bdbdbd] bg-[#ececec]" : "border-[#7c7c7c]",
            !disabled && !checked && "bg-linear-to-b from-[#f5f5f5] via-[#d2d2d2] to-[#f2f2f2]",
            !disabled && checked && "bg-linear-to-b from-[#e6ecff] via-[#9ccdf0] to-[#4ff0f6]",
          )}
        />
        {checked && <span className={clsx("pointer-events-none size-2 rounded-full", disabled ? "bg-[#a8a8a8]" : "bg-[#0b4c9c]")} />}
      </span>
      <label htmlFor={id}>{label}</label>
    </div>
  );
}

function TasksPanel() {
  const button = "h-[29px] border-2 border-[#a6a6a6] bg-linear-to-b from-[#f8f8f8] to-[#dedede] leading-none text-[#9a9a9a]";
  return (
    <section className="flex w-[280px] shrink-0 flex-col overflow-hidden border-r border-l-4 border-[#1b2231] bg-[#eaeaea]">
      <div className="flex h-9 shrink-0 items-center gap-2.5 bg-[#b0b0b0] pr-2 pb-1 pl-2 text-white">
        <h2 className="flex-1 text-[23px] leading-none">任务</h2>
        <WinButton glyph="restore" />
        <WinButton glyph="columns" />
        <WinButton glyph="right" />
      </div>
      <div className="h-[10px] shrink-0 bg-[#e6e6e6]" />
      <h3 className="flex h-[31px] shrink-0 items-center border-b border-[#7a7a7a] bg-linear-to-b from-white to-[#e0e0e0] pb-1 pl-2 text-[23px] leading-none font-bold">
        选项
      </h3>
      <div className="flex h-[41px] shrink-0 items-center justify-end pr-2"><Tool name="windowView" /></div>
      <div className="h-[5px] shrink-0 bg-[#9b9b9b]" />
      <FoldHeader text="查找和替换" open />
      <form className="min-h-0 flex-1 overflow-hidden pt-[23px] pl-[18px] text-lg leading-none">
        <div className="w-[278px]">
          <Combo id="find" label="查找" />
          <div className="pt-2.5">
            <Option id="whole" label="全字匹配" />
            <Option id="case" label="区分大小写" />
            <Option id="sub" label="在子结构中查找" disabled />
            <Option id="hidden" label="在隐藏文本中查找" checked disabled />
            <Option id="wild" label="使用通配符" disabled />
            <Option id="regex" label="使用正则表达式" disabled />
          </div>
          <div className="pt-[11px]">
            <Radio id="down" name="direction" label="向下" checked />
            <Radio id="up" name="direction" label="向上" />
          </div>
          <button type="button" className={clsx(button, "mt-1 mb-[26px] w-full")}>查找</button>
          <Combo id="replace" label="替换为" />
          <div className="pt-2">
            <Radio id="doc" name="range" label="整个文档" checked disabled />
            <Radio id="pos" name="range" label="从当前位置开始" disabled />
            <Radio id="sel" name="range" label="选择" disabled />
          </div>
          <div className="flex gap-2 pt-1.5">
            <button type="button" className={clsx(button, "flex-1")}>替换</button>
            <button type="button" className={clsx(button, "flex-1")}>全部替换</button>
          </div>
        </div>
      </form>
      <HScroll thumb="w-[200px]" />
      <div className="h-[5px] shrink-0 bg-[#9b9b9b]" />
      <FoldHeader text="语言和资源" />
    </section>
  );
}

function SideTabs() {
  const tab = "flex w-[31px] flex-col items-center border border-[#888] text-[22px] leading-none";
  const text = "[text-orientation:sideways] [writing-mode:vertical-rl]";
  return (
    <aside className="flex w-[34px] shrink-0 flex-col gap-1 bg-[#b0b0b0] pt-[46px]">
      <button type="button" className={clsx(tab, "h-[110px] gap-1.5 bg-[#f0f0f0] pt-1 font-bold")}>
        <Icon name="clip" />
        <span className={text}>任务</span>
      </button>
      <button type="button" className={clsx(tab, "h-[86px] gap-1.5 bg-[#dcdcdc] pt-1 text-[#5c5c5c]")}>
        <Icon name="book" />
        <span className={text}>库</span>
      </button>
      <button type="button" className={clsx(tab, "h-[91px] bg-[#dcdcdc] pt-[18px] text-[#5c5c5c]")}>
        <span className={text}>插件</span>
      </button>
    </aside>
  );
}

/* ---------- status bar ---------- */

const windows = [
  { icon: "overview", text: "总览" },
  { icon: "network", text: "设备和网络" },
  { icon: "main", text: "Main (OB1)" },
];

function StatusBar() {
  const item = "flex h-[31px] w-[170px] items-center gap-2 pl-1 text-[19px] leading-none whitespace-nowrap";
  return (
    <footer className="flex h-[41px] shrink-0 items-center bg-[#1c1c1c] text-white">
      <button type="button" className="flex w-[265px] items-center gap-3 pl-[43px] text-xl leading-none font-medium">
        <Sign glyph="left" />
        <span>Portal <span className="text-[23px] leading-none">视图</span></span>
      </button>
      <nav className="flex gap-1 text-[#2b2b2b]">
        {windows.map((w) => (
          <button type="button" key={w.text} className={clsx(item, "bg-[#c2c2c2]")}>
            <Icon name={w.icon} />
            <span><Mixed text={w.text} /></span>
          </button>
        ))}
        <button type="button" className={clsx(item, "bg-white text-black")}>
          <Icon name="db" />
          <span><b>数据</b> <span className="text-[17px]">(DB2)</span></span>
        </button>
      </nav>
      <div className="ml-auto flex h-full w-[532px] items-center">
        <button type="button" aria-label="jobs" className="grid h-[31px] w-[30px] place-items-center bg-[#d0d0d0]"><Icon name="jobs" /></button>
        <div className="ml-2.5 flex h-full items-center gap-2 border-l border-[#555] pl-1">
          <svg viewBox="0 0 24 24" className="size-6" aria-hidden="true">
            <circle cx="12" cy="12" r="11" fill="#0a12f0" />
            <path d="M6 12l4 6 8-12" fill="none" stroke="#fff" strokeWidth="3" />
          </svg>
          <p className="text-[19px] leading-none"><Mixed text="已创建项目 modbus tcp" /><Mark>。</Mark></p>
        </div>
      </div>
    </footer>
  );
}

export default function App() {
  return (
    <div className="flex h-screen flex-col overflow-hidden bg-[#b0b0b0] font-['Noto_Sans','Noto_Sans_CJK_SC',sans-serif] text-black">
      <Defs />
      <TopBar />
      <main className="flex min-h-0 flex-1">
        <aside className="w-[29px] shrink-0 bg-[#b0b0b0]">
          <div className="h-9 border-b border-[#f0f0f0]" />
          <button type="button" className="flex h-[333px] w-full items-center justify-start border-b-2 border-[#f0f0f0] text-xl leading-7 font-bold text-white">
            <span className="rotate-180 [text-orientation:sideways] [writing-mode:vertical-rl]">PLC 编程</span>
          </button>
        </aside>
        <TreePanel />
        <Editor />
        <TasksPanel />
        <SideTabs />
      </main>
      <StatusBar />
    </div>
  );
}
